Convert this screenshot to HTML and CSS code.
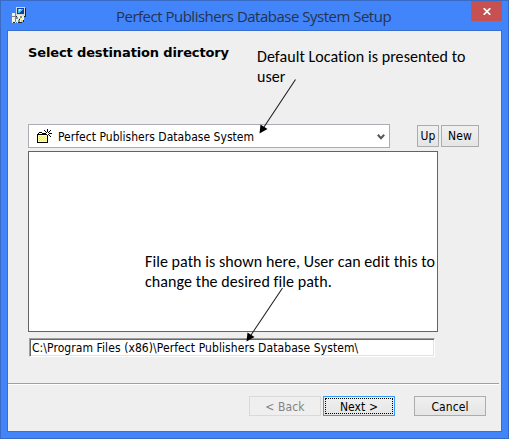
FILE: index.html
```html
<!DOCTYPE html>
<html lang="en">
<head>
<meta charset="utf-8">
<title>Perfect Publishers Database System Setup</title>
<link rel="stylesheet" href="styles.css">
</head>
<body>
<div class="window">
  <header class="titlebar">
    <svg class="app-icon" width="16" height="17" viewBox="0 0 16 17" shape-rendering="crispEdges">
      <path fill="#f2f2ee" d="M0 6h5v10H0z"/>
      <path fill="#85857d" d="M0 6h1v10H0zM4 6h1v9H4zM1 9h3v1H1z"/>
      <path fill="#d8d8d0" d="M5 0h9v9H5z"/>
      <path fill="#222" d="M14 1h1v9h-1zM5 9h9v1H5zM2 15h2v1H2z"/>
      <path fill="#0b3fae" d="M6 1h7v6H6z"/>
      <path fill="#38c6ef" d="M7 2h5v1h-1v1h-1v1H9v1H7z"/>
      <path fill="#d0f8f6" d="M8 2h2v1H9v1H8z"/>
      <path fill="#eee" d="M6 8h5v1h2v5h-2v2H6v-1H5v-5h1z"/>
      <path fill="#629c9c" d="M5 10h2v2H5zM9 9h2v2H9zM7 13h2v2H7z"/>
      <path fill="#e4d557" d="M8 11h2v1H8zM10 13h2v2h-2z"/>
      <path fill="#222" d="M8 12h1v1H8zM11 15h-4v1h4zM12 13h1v2h-1z"/>
    </svg>
    <h1 class="title">Perfect Publishers Database System Setup</h1>
    <button class="close" aria-label="Close">
      <svg width="8" height="7" viewBox="0 0 8 7"><path d="M.7.2 7.3 6.8M7.3.2.7 6.8" stroke="#fff" stroke-width="1.7"/></svg>
    </button>
  </header>
  <main class="client">
    <h2 class="heading">Select destination directory</h2>
    <div class="location">
      <div class="combo">
        <svg class="folder" width="16" height="15" viewBox="0 0 16 15" shape-rendering="crispEdges">
          <path fill="#ffff9c" d="M1 5h9v8H1z"/>
          <path fill="#f3ea5c" d="M2 7h1v1H2zM4 7h1v1H4zM6 7h1v1H6zM8 7h1v1H8zM3 8h1v1H3zM5 8h1v1H5zM7 8h1v1H7zM2 9h1v1H2zM4 9h1v1H4zM6 9h1v1H6zM8 9h1v1H8zM3 10h1v1H3zM5 10h1v1H5zM7 10h1v1H7zM2 11h1v1H2zM4 11h1v1H4zM6 11h1v1H6zM8 11h1v1H8z"/>
          <path fill="#000" d="M1 4h1v1H1zM2 3h3v1H2zM5 4h1v1H5zM0 5h1v8H0zM1 5h9v1H1zM10 6h1v8h-1zM0 13h11v1H0zM10 0h1v3h-1zM7 1h1v1H7zM8 2h1v1H8zM9 3h1v1H9zM13 1h1v1h-1zM12 2h1v1h-1zM11 3h1v1h-1zM6 4h3v1H6zM12 4h3v1h-3zM11 5h1v1h-1zM12 6h1v1h-1zM13 7h1v1h-1zM8 5h1v1H8z"/>
        </svg>
        <span class="combo-text">Perfect Publishers Database System</span>
        <svg class="chevron" width="8" height="6" viewBox="0 0 8 6"><path d="M.8.8 4 4.2 7.2.8" fill="none" stroke="#555" stroke-width="2"/></svg>
      </div>
      <button class="btn up"><span>Up</span></button>
      <button class="btn new"><span>New</span></button>
    </div>
    <div class="list"></div>
    <div class="path"><span>C:\Program Files (x86)\Perfect Publishers Database System\</span></div>
    <footer class="footer">
      <button class="btn back" disabled><span>&lt; Back</span></button>
      <button class="btn next"><span>Next &gt;</span></button>
      <button class="btn cancel"><span>Cancel</span></button>
    </footer>
  </main>
  <p class="note note-location">Default Location is presented to<br>user</p>
  <p class="note note-path">File path is shown here, User can edit this to<br>change the desired file path.</p>
  <svg class="arrows" width="509" height="439" viewBox="0 0 509 439">
    <path d="M295.500 79.500 264 127M282.500 288 251 335" stroke="#222" stroke-width="1.1"/>
    <path d="M259.500 133.500 260.500 124.500 267.500 129zM246.500 341.500 247.500 332.500 254.500 337z"/>
  </svg>
</div>
</body>
</html>
```
FILE: styles.css
```css
* { box-sizing: border-box; }
body { margin: 0; }
.window {
  position: relative;
  width: 509px;
  height: 439px;
  padding: 0 6px 6px;
  background: #4284fa;
  border: 1px solid #3a6bc4;
  overflow: hidden;
  color: #000;
  font: 12px/16px "DejaVu Sans Condensed", "DejaVu Sans", sans-serif;
  font-stretch: condensed;
}
.titlebar {
  display: flex;
  align-items: flex-start;
  height: 29px;
  padding-left: 4px;
}
.app-icon { margin-top: 6px; }
.title {
  flex: 1;
  margin: 3px 0 0 89px;
  font: 15px/25px "Open Sans", "Noto Sans", sans-serif;
  letter-spacing: -0.5px;
  color: #26334d;
  white-space: nowrap;
}
.close {
  display: flex;
  align-items: center;
  justify-content: center;
  width: 31px;
  height: 20px;
  padding: 0 0 0 1px;
  border: 0;
  background: #c75050;
}
.client {
  height: 402px;
  border: 1px solid #3a6fd2;
  background: #efefef;
}
.heading {
  height: 93px;
  margin: 0;
  padding: 13px 0 0 20px;
  font: bold 13px/17px "DejaVu Sans", sans-serif;
  letter-spacing: -0.13px;
}
.location {
  display: flex;
  align-items: center;
  height: 24px;
  padding-left: 20px;
}
.combo {
  display: flex;
  align-items: center;
  width: 362px;
  height: 24px;
  padding: 0 4px 0 8px;
  border: 1px solid #abadb3;
  background: #fff;
}
.combo-text {
  flex: 1;
  margin: 1px 0 0 5px;
  letter-spacing: 0.03px;
  white-space: nowrap;
}
.chevron { margin-top: 1px; }
.btn {
  display: flex;
  align-items: center;
  justify-content: center;
  padding: 0;
  border: 1px solid #acacac;
  background: linear-gradient(#f0f0f0, #e5e5e5);
  color: #000;
  font: inherit;
  letter-spacing: 0.1px;
  white-space: nowrap;
}
.up { width: 22px; height: 22px; margin-left: 27px; }
.new { width: 38px; height: 22px; margin-left: 2px; }
.list {
  width: 410px;
  height: 181px;
  margin: 3px 0 0 20px;
  border: 1px solid #646464;
  background: #fff;
}
.path {
  width: 406px;
  height: 19px;
  margin: 6px 0 26px 21px;
  border: 1px solid;
  border-color: #a0a0a0 #fff #fff #a0a0a0;
  background: #fff;
  box-shadow: inset 1px 1px #696969, inset -1px -1px #e3e3e3;
  padding: 2px 0 0 2px;
  line-height: 15px;
  letter-spacing: 0.08px;
  white-space: nowrap;
}
.footer {
  display: flex;
  width: 491px;
  border-top: 1px solid #a0a0a0;
  box-shadow: inset 0 1px #fff;
  padding: 12px 0 0 241px;
}
.footer .btn { width: 72px; height: 20px; padding-top: 1px; }
.btn.back { border-color: #d9d9d9; background: #efefef; color: #838383; }
.btn.next {
  margin: 0 19px 0 2px;
  border-color: #3399ff;
  outline: 1px dotted #000;
  outline-offset: -3px;
}
.note {
  position: absolute;
  margin: 0;
  font: 16px/20px Carlito, Calibri, Lato, sans-serif;
  letter-spacing: 0.07px;
  white-space: nowrap;
}
.note-location { left: 256px; top: 46px; }
.note-path { left: 144px; top: 251px; }
.arrows { position: absolute; left: -1px; top: -1px; }
```
